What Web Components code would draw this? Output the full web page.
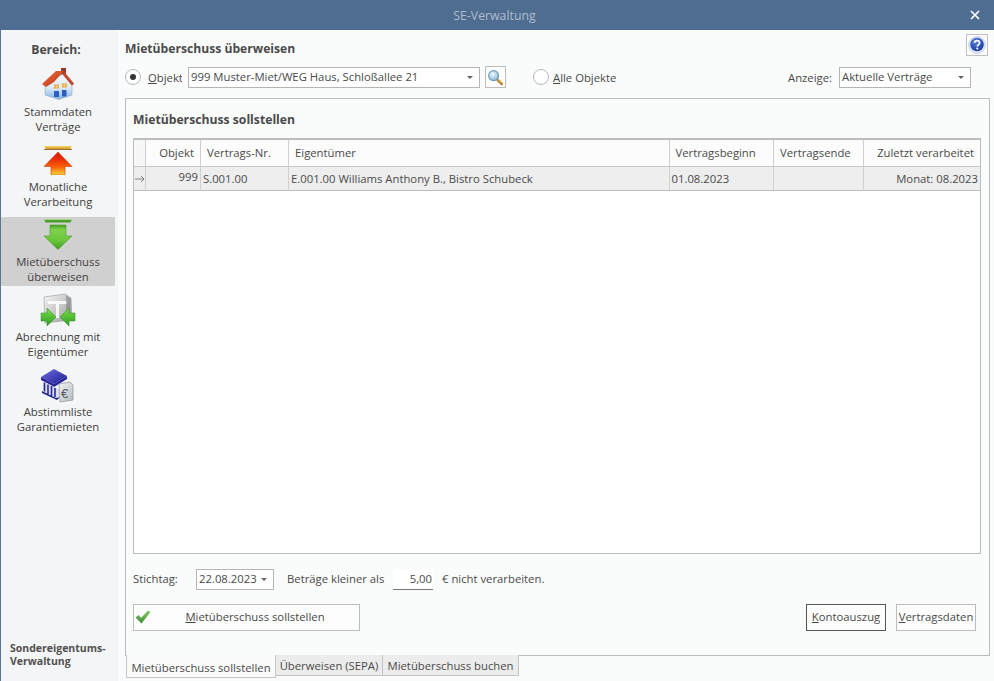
<!DOCTYPE html>
<html lang="de">
<head>
<meta charset="utf-8">
<title>SE-Verwaltung</title>
<style>
html,body{margin:0;padding:0;height:100%;overflow:hidden}
body{font:12px/15px "Open Sans","Noto Sans",sans-serif;color:#4a4a4a;background:#fafbfb}
</style>
</head>
<body>
<x-app></x-app>
<script>
const ICONS = {
house:`<svg width="34" height="32" viewBox="0 0 34 32"><defs><linearGradient id="w" x1="0" y1="0" x2="0" y2="1"><stop offset="0" stop-color="#f6f8fb"/><stop offset=".55" stop-color="#dbe9f7"/><stop offset="1" stop-color="#7fb2e6"/></linearGradient><linearGradient id="r" x1="0" y1="0" x2="1" y2="1"><stop offset="0" stop-color="#e9673a"/><stop offset="1" stop-color="#bb3d1c"/></linearGradient></defs>
<path d="M20 0h5v8h-5z" fill="#97392a"/>
<path d="M4 16 22 6l9 10v11l-13 4.500L4 27z" fill="url(#w)" stroke="#8ea3b8" stroke-width=".5"/>
<path d="M1 16 15 3h8L13 14 5 19z" fill="url(#r)"/><path d="M23 3.500 33 15.500l-2 2.300L22 7z" fill="#c4482a"/>
<path d="M13 16.500h5v4h-5zM21 15.500h5v4h-5z" fill="#f0a33a"/><path d="M15.500 16.500v4M13 18.500h5M23.500 15.500v4M21 17.500h5" stroke="#f8dfa8" stroke-width=".6"/>
<path d="M13 23h5v6h-5zM21 22h4.500v6.500H21z" fill="#2a5fc0"/></svg>`,
up:`<svg width="34" height="32" viewBox="0 0 34 32"><defs><linearGradient id="b" x1="0" y1="0" x2="0" y2="1"><stop offset="0" stop-color="#f7d56a"/><stop offset="1" stop-color="#dd9a1e"/></linearGradient><linearGradient id="a" x1="0" y1="0" x2="0" y2="1"><stop offset="0" stop-color="#d81f08"/><stop offset=".3" stop-color="#ea2a08"/><stop offset=".65" stop-color="#fa620a"/><stop offset="1" stop-color="#fcd63a"/></linearGradient></defs>
<path d="M3 3h28l-2 3H5z" fill="url(#b)"/><path d="M3 6.400h28" stroke="#8a6a2a" stroke-width="1"/>
<path d="M17 9 31 23.500H24V32H10V23.500H3z" fill="url(#a)" stroke="#c9400e" stroke-width=".6"/></svg>`,
down:`<svg width="34" height="32" viewBox="0 0 34 32"><defs><linearGradient id="a" x1="0" y1="0" x2="0" y2="1"><stop offset="0" stop-color="#46a024"/><stop offset=".2" stop-color="#80d24c"/><stop offset=".65" stop-color="#69c63a"/><stop offset="1" stop-color="#3d9b20"/></linearGradient></defs>
<path d="M3 1h28l-1.500 3.500h-25z" fill="#4c9e2c"/><path d="M3 1.500h28" stroke="#a7dc85"/><path d="M9 7h16v11h6L17 31.500 3 18h6z" fill="url(#a)" stroke="#4b9c2e" stroke-width=".6"/></svg>`,
contract:`<svg width="36" height="36" viewBox="0 0 36 36"><defs><linearGradient id="d" x1="0" y1="0" x2="1" y2="1"><stop offset="0" stop-color="#f6f6f6"/><stop offset="1" stop-color="#9a9a9a"/></linearGradient><linearGradient id="a" x1="0" y1="0" x2="0" y2="1"><stop offset="0" stop-color="#7cdc4c"/><stop offset="1" stop-color="#2a9f20"/></linearGradient></defs>
<path d="M4 4 25 1l6 4 1 22-27 3z" fill="url(#d)" stroke="#9a9a9a" stroke-width=".6"/><path d="M8 8h19v3H19v14h-3V11H8z" fill="#fff" opacity=".85"/><path d="M26 2l5 4-1 20-4 1z" fill="#6f6f6f" opacity=".45"/>
<path d="M1 20h6v-5l9 9-9 9v-5H1z" fill="url(#a)" stroke="#2f8f24" stroke-width=".5"/><path d="M35 20h-6v-5l-9 9 9 9v-5h6z" fill="url(#a)" stroke="#2f8f24" stroke-width=".5"/></svg>`,
bank:`<svg width="36" height="36" viewBox="0 0 36 36"><defs><linearGradient id="p" x1="0" y1="0" x2="1" y2="1"><stop offset="0" stop-color="#7070e0"/><stop offset="1" stop-color="#1c1c92"/></linearGradient><linearGradient id="d" x1="0" y1="0" x2="1" y2="1"><stop offset="0" stop-color="#f3f4f5"/><stop offset="1" stop-color="#b6babd"/></linearGradient></defs>
<path d="M1 9 14 1l13 7-13 8z" fill="url(#p)"/><path d="M1 9v3l13 7 13-8V8L14 16z" fill="#26269a"/>
<path d="M3 13l17 9-1 7-3 1L3 23z" fill="#dcdcec"/><path d="M4.500 14.500v9M8 16.500v9.500M11.500 18v10M15 20v9" stroke="#2a2aa0" stroke-width="1.600"/><path d="M2 23l14 7 4-1-3 3-15-7z" fill="#1f1f8e"/>
<path d="M19 16l11-2 3 3v15l-13 2z" fill="url(#d)" stroke="#8e9499" stroke-width=".7"/>
<text x="21" y="30" font-family="Liberation Sans,sans-serif" font-size="13" fill="#4d5a63">€</text></svg>`,
search:`<svg width="17" height="17" viewBox="0 0 18 18"><defs><radialGradient id="g" cx=".4" cy=".35" r=".7"><stop offset="0" stop-color="#eef7fc"/><stop offset="1" stop-color="#86b6d6"/></radialGradient></defs><path d="M10.500 10.500l5 5" stroke="#b9852e" stroke-width="3" stroke-linecap="round"/><path d="M11 10l5 5" stroke="#eec56a" stroke-width="1"/><circle cx="7" cy="7" r="5.300" fill="url(#g)" stroke="#6d9cbc" stroke-width="1.100"/></svg>`,
help:`<svg width="18" height="18" viewBox="0 0 18 18"><defs><radialGradient id="g" cx=".4" cy=".3" r=".75"><stop offset="0" stop-color="#5a82d8"/><stop offset="1" stop-color="#12379a"/></radialGradient></defs><circle cx="9" cy="9" r="8.500" fill="#dfe6f5" stroke="#aab9dc" stroke-width=".5"/><circle cx="9" cy="8.500" r="6.800" fill="url(#g)"/><path d="M6.500 6.800C6.700 5.300 7.800 4.700 9 4.700c1.500 0 2.600.9 2.600 2.200 0 1.900-2.300 1.900-2.300 3.500" fill="none" stroke="#fff" stroke-width="1.700"/><circle cx="9.300" cy="12.600" r="1.050" fill="#fff"/></svg>`,
check:`<svg width="16" height="14" viewBox="0 0 16 14"><defs><linearGradient id="g" x1="0" y1="0" x2="0" y2="1"><stop offset="0" stop-color="#88c96a"/><stop offset="1" stop-color="#3d8d35"/></linearGradient></defs><path d="M.5 7.500 3.500 5 6.200 7.700 13 .5 15.500 2 6.500 13.500z" fill="url(#g)"/></svg>`
};
function def(name, html, init){
  const t=document.createElement('template'); t.innerHTML=html;
  customElements.define(name, class extends HTMLElement{
    constructor(){super();this.attachShadow({mode:'open'}).appendChild(t.content.cloneNode(true));}
    connectedCallback(){ if(init) init.call(this,this.shadowRoot); }
  });
}
def('x-icon',`<style>:host{display:inline-flex;align-items:center;justify-content:center;line-height:0}</style><span></span>`,
 function(s){s.querySelector('span').innerHTML=ICONS[this.getAttribute('name')]||'';});

def('x-titlebar',`<style>
:host{display:flex;align-items:center;justify-content:center;position:relative;height:30px;box-sizing:border-box;padding-right:5px;background:#4f6d91;color:#aebccd;font-size:12.300px}
svg{position:absolute;right:14px;top:10px}
</style><slot></slot><svg width="10" height="10" viewBox="0 0 10 10"><path d="M1 1l8 8M9 1l-8 8" stroke="#fff" stroke-width="1.700"/></svg>`);

def('x-nav-item',`<style>
:host{display:flex;flex-direction:column;align-items:center;height:69px;box-sizing:border-box;text-align:center;color:#404040;font-size:11.300px;line-height:15px;width:114px}
:host([selected]){background:#d0d0d0;border-radius:1px}
.i{height:37px;box-sizing:border-box;padding-top:1px;display:flex;align-items:flex-start;justify-content:center}
</style><div class="i"><slot name="icon"></slot></div><slot></slot>`);

def('x-sidebar',`<style>
:host{display:flex;flex-direction:column;width:118px;background:#f4f5f6;border-left:1px solid #5b7597;box-sizing:border-box;flex:none}
h2{margin:12px 0 10px;height:15px;font:700 12.200px/15px "Open Sans",sans-serif;color:#4a4a4a;text-align:center;width:110px}
nav{display:flex;flex-direction:column;gap:6px}
.foot{margin-top:auto;padding:0 0 13px 9px;font-weight:700;font-size:10.500px;line-height:13px;color:#505050}
</style><h2>Bereich:</h2><nav><slot></slot></nav><div class="foot">Sondereigentums-<br>Verwaltung</div>`);

def('x-radio',`<style>
:host{display:inline-flex;align-items:center;gap:7px;color:#4a4a4a;font-size:11.300px}
i{width:16px;height:16px;box-sizing:border-box;border:1px solid #b8b8b8;border-radius:50%;background:#fff;display:flex;align-items:center;justify-content:center;flex:none}
:host([checked]) i::after{content:"";width:6px;height:6px;border-radius:50%;background:#333}
</style><i></i><slot></slot>`);

def('x-combo',`<style>
:host{display:flex;align-items:center;height:21px;box-sizing:border-box;border:1px solid #b5b5b5;background:#fff;color:#4a4a4a;padding:0 6px 0 2px;font-size:11.300px;justify-content:space-between}
:host::after{content:"";border:3px solid transparent;border-top:3px solid #666;border-bottom:0;flex:none}
span{white-space:nowrap;margin-top:-2px}
</style><span><slot></slot></span>`);

def('x-btn',`<style>
:host{display:flex;align-items:center;justify-content:center;height:27px;box-sizing:border-box;padding-bottom:2px;border:1px solid #bdbdbd;background:#fdfdfd;color:#4a4a4a;font-size:11.300px;white-space:nowrap}
:host([focused]){border-color:#555}
</style><slot></slot>`);

def('x-grid',`<style>
:host{display:block;flex:1;min-height:0;background:#fff;border:1px solid #bdbdbd;border-top-width:2px;box-sizing:border-box;color:#4a4a4a;font-size:11.300px}
.r{display:grid;grid-template-columns:12px 55px 88px 380.500px 104.500px 90px 1fr}
.h>div{height:27px;border-right:1px solid #cfcfcf;border-bottom:1px solid #c8c8c8;display:flex;align-items:center;padding:0 6px 2px;overflow:hidden;white-space:nowrap;background:#fcfcfc}
.d>div{height:24px;border-right:1px solid #cfcfcf;border-bottom:1px solid #bdbdbd;display:flex;align-items:center;padding:0 2px;background:#eeeeee;white-space:nowrap;overflow:hidden}
.r>div{min-width:0;box-sizing:border-box}
.e{justify-content:flex-end}
.r>div:last-child{border-right:0}
.a{padding:0!important;justify-content:center;background:#f3f3f3}
</style>
<div class="r h"><div class="a" style="background:#f7f7f7"></div><div class="e">Objekt</div><div>Vertrags-Nr.</div><div>Eigentümer</div><div>Vertragsbeginn</div><div>Vertragsende</div><div class="e">Zuletzt verarbeitet</div></div>
<div class="r d"><div class="a"><svg width="10" height="8" viewBox="0 0 10 8"><path d="M0 4h9M6 1l3 3-3 3" fill="none" stroke="#777" stroke-width=".9"/></svg></div><div class="e"><span style="margin-top:-4px">999</span></div><div>S.001.00</div><div>E.001.00 Williams Anthony B., Bistro Schubeck</div><div>01.08.2023</div><div></div><div class="e">Monat: 08.2023</div></div>`);

def('x-tab',`<style>
:host{display:flex;align-items:center;justify-content:center;height:21px;box-sizing:border-box;background:#ececec;border:1px solid #c4c4c4;border-top:0;color:#4a4a4a;font-size:11.300px;white-space:nowrap;margin-left:-1px}
:host([active]){background:#fbfbfb;height:23px;padding:2px 0 0;z-index:1;margin-left:0}
</style><slot></slot>`);

def('x-panel',`<style>
:host{display:flex;flex-direction:column;height:558px;box-sizing:border-box;border:1px solid #bdbdbd;margin-right:4px;padding:0 8px 24px 7px;background:#fafbfb}
h3{margin:13px 0 10px;font:700 12.200px/16px "Open Sans",sans-serif;color:#4a4a4a;height:16px}
</style><h3><slot name="title"></slot></h3><slot></slot>`);

def('x-app',`<style>
:host{display:flex;flex-direction:column;width:994px;height:681px;font:12px/15px "Open Sans",sans-serif;color:#4a4a4a;overflow:hidden}
.body{display:flex;flex:1;min-height:0}
main{flex:1;display:flex;flex-direction:column;padding:4px 0 0 6px;margin-left:1px;background:#fafbfb;min-width:0}
.t{display:flex;align-items:flex-start;height:32px}
h1{flex:1;margin:7px 0 0;font:700 12.150px/15px "Open Sans",sans-serif;color:#4a4a4a}
.help{width:22px;height:22px;border:1px solid #c0c0c0;background:#fdfdfd;margin-right:6px;box-sizing:border-box;display:flex;align-items:center;justify-content:center}
.row{display:flex;align-items:center;height:22px;margin-bottom:10px}
.s{width:21px;height:22px;border:1px solid #bdbdbd;box-sizing:border-box;background:#fdfdfd;margin-left:5px;display:flex;align-items:center;justify-content:center}
.ob{width:34px;overflow:hidden;white-space:nowrap;display:inline-block}
.anz{margin-left:auto;display:flex;align-items:center;gap:7px;margin-right:23px;font-size:11.300px}
.f1{display:flex;align-items:center;height:21px;margin:15px 0 14px;font-size:11.300px}
.f1>span{margin-top:-2px}
.amt{width:40px;height:21px;box-sizing:border-box;background:#fff;border-bottom:1px solid #777;text-align:right;padding:2px 1px 0 0;margin:0 9px 0 11px}
.f2{display:flex;gap:10px;height:27px;padding-right:5px}
.tabs{display:flex;margin:-1px 0 0 1px;position:relative}
u{text-decoration:underline;text-underline-offset:1px}
</style>
<x-titlebar>SE-Verwaltung</x-titlebar>
<div class="body">
<x-sidebar>
 <x-nav-item><x-icon slot="icon" name="house"></x-icon>Stammdaten<br>Verträge</x-nav-item>
 <x-nav-item><x-icon slot="icon" name="up"></x-icon>Monatliche<br>Verarbeitung</x-nav-item>
 <x-nav-item selected><x-icon slot="icon" name="down"></x-icon>Mietüberschuss<br>überweisen</x-nav-item>
 <x-nav-item><x-icon slot="icon" name="contract"></x-icon>Abrechnung mit<br>Eigentümer</x-nav-item>
 <x-nav-item><x-icon slot="icon" name="bank"></x-icon>Abstimmliste<br>Garantiemieten</x-nav-item>
</x-sidebar>
<main>
 <div class="t"><h1>Mietüberschuss überweisen</h1><div class="help"><x-icon name="help"></x-icon></div></div>
 <div class="row">
  <x-radio checked><span class="ob"><u>O</u>bjekt</span></x-radio>
  <x-combo style="width:292px;margin-left:6px">999 Muster-Miet/WEG Haus, Schloßallee 21</x-combo>
  <div class="s"><x-icon name="search"></x-icon></div>
  <x-radio style="margin-left:27px;gap:4px"><span><u>A</u>lle Objekte</span></x-radio>
  <div class="anz">Anzeige: <x-combo style="width:132px">Aktuelle Verträge</x-combo></div>
 </div>
 <x-panel>
  <span slot="title">Mietüberschuss sollstellen</span>
  <x-grid></x-grid>
  <div class="f1">
   <span style="width:63px">Stichtag:</span>
   <x-combo style="width:78px">22.08.2023</x-combo>
   <span style="margin-left:13px;width:95px;white-space:nowrap">Beträge kleiner als</span>
   <div class="amt">5,00</div>
   <span>€ nicht verarbeiten.</span>
  </div>
  <div class="f2">
   <x-btn style="width:227px;position:relative"><x-icon name="check" style="position:absolute;left:1px;top:5px"></x-icon><span style="margin-left:17px"><u>M</u>ietüberschuss sollstellen</span></x-btn>
   <x-btn focused style="width:80px;margin-left:auto"><span><u>K</u>ontoauszug</span></x-btn>
   <x-btn style="width:80px"><span><u>V</u>ertragsdaten</span></x-btn>
  </div>
 </x-panel>
 <div class="tabs"><x-tab active style="width:150px">Mietüberschuss sollstellen</x-tab><x-tab style="width:108px">Überweisen (SEPA)</x-tab><x-tab style="width:137px">Mietüberschuss buchen</x-tab></div>
</main>
</div>`);
</script>
</body>
</html>
